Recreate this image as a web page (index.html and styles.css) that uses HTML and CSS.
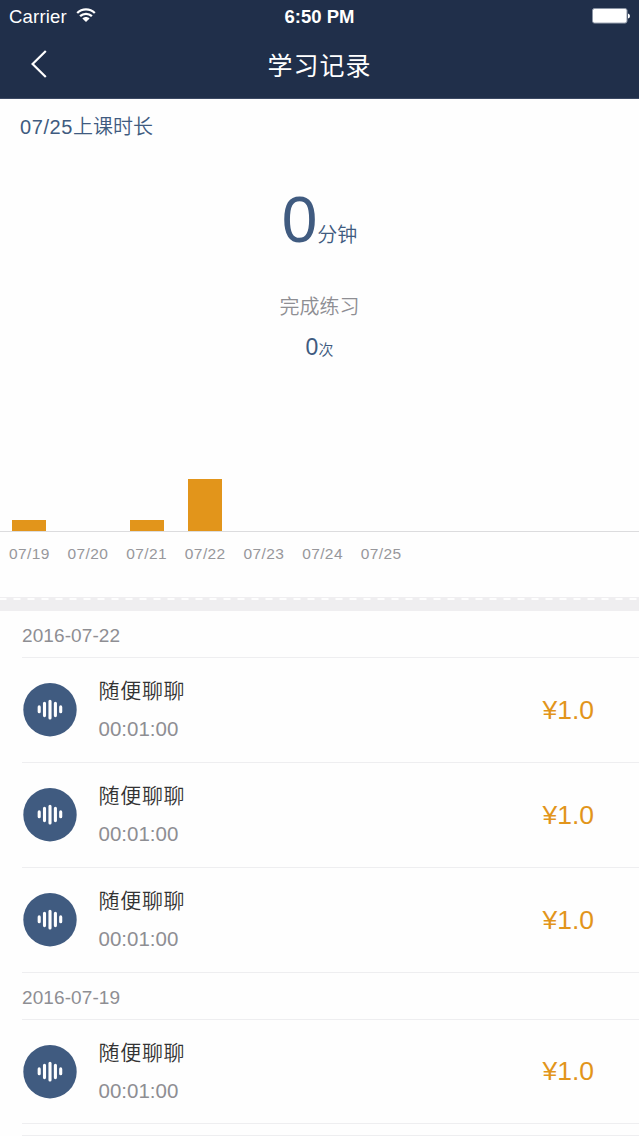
FILE: index.html
```html
<!DOCTYPE html>
<html lang="zh-CN">
<head>
    <meta charset="UTF-8">
    <meta name="viewport" content="width=device-width, initial-scale=1.0">
    <title>学习记录</title>
    <link rel="stylesheet" href="styles.css">
</head>
<body>
    <!-- 波形图标，列表里重复使用 -->
    <svg class="defs">
        <symbol id="wave" viewBox="0 0 54 54">
            <circle cx="27" cy="26.7" r="26.7" fill="#405b80"/>
            <path d="M16.2 23.9v4.8M21.5 20.2v12.4M27 18.3v16.6M32.4 20.2v12.4M37.7 23.9v4.8" stroke="#fff" stroke-width="3.1" stroke-linecap="round"/>
        </symbol>
    </svg>

    <div class="header">
        <div class="status">
            <div class="carrier">
                <span>Carrier</span>
                <svg class="wifi" viewBox="0 0 20 14">
                    <path d="M1.2 5C6.2.2 13.8.2 18.8 5M4.1 8.2C7.5 5 12.5 5 15.9 8.2" fill="none" stroke="#fff" stroke-width="2.3"/>
                    <path d="M6.4 10.4C8.4 8.4 11.6 8.4 13.6 10.4L10 14z" fill="#fff"/>
                </svg>
            </div>
            <div class="time">6:50 PM</div>
            <div class="power">
                <svg class="battery" viewBox="0 0 38 16">
                    <rect x=".5" y=".5" width="34.5" height="14.6" rx="2" fill="#fff" stroke="#8b95a5"/>
                    <path d="M36 5.5q2 .5 2 2.5t-2 2.5z" fill="#fff"/>
                </svg>
            </div>
        </div>
        <div class="nav">
            <svg class="back" viewBox="0 0 16 28"><path d="M14.8 1L1.6 14L14.8 27" fill="none" stroke="#fff" stroke-width="2.2"/></svg>
            <div class="title">学习记录</div>
        </div>
    </div>

    <div class="summary">
        <div class="day"><span class="num">07/25</span>上课时长</div>
        <div class="minutes"><span class="num">0</span>分钟</div>
        <div class="label">完成练习</div>
        <div class="times"><span class="num">0</span>次</div>
        <div class="chart">
            <div class="col"><div class="bar" style="height: 11px"></div></div>
            <div class="col"></div>
            <div class="col"><div class="bar" style="height: 11px"></div></div>
            <div class="col"><div class="bar" style="height: 52px"></div></div>
        </div>
        <div class="dates">
            <span>07/19</span>
            <span>07/20</span>
            <span>07/21</span>
            <span>07/22</span>
            <span>07/23</span>
            <span>07/24</span>
            <span>07/25</span>
        </div>
    </div>
    <div class="divider"></div>

    <div class="list">
        <div class="date">2016-07-22</div>
        <div class="item">
            <svg class="icon"><use href="#wave"/></svg>
            <div class="info">
                <div class="name">随便聊聊</div>
                <div class="length">00:01:00</div>
            </div>
            <div class="price">¥1.0</div>
        </div>
        <div class="item">
            <svg class="icon"><use href="#wave"/></svg>
            <div class="info">
                <div class="name">随便聊聊</div>
                <div class="length">00:01:00</div>
            </div>
            <div class="price">¥1.0</div>
        </div>
        <div class="item">
            <svg class="icon"><use href="#wave"/></svg>
            <div class="info">
                <div class="name">随便聊聊</div>
                <div class="length">00:01:00</div>
            </div>
            <div class="price">¥1.0</div>
        </div>
        <div class="date">2016-07-19</div>
        <div class="item last">
            <svg class="icon"><use href="#wave"/></svg>
            <div class="info">
                <div class="name">随便聊聊</div>
                <div class="length">00:01:00</div>
            </div>
            <div class="price">¥1.0</div>
        </div>
        <div class="rest"></div>
    </div>
</body>
</html>
```
FILE: styles.css
```css
*{
    box-sizing: border-box;
}
body{
    margin: 0;
    height: 1136px;
    overflow: hidden;
    background-color: #fefefe;
    font-family: "Liberation Sans", "Noto Sans CJK SC", sans-serif;
    font-weight: 350;
}
svg{
    display: block;
}
.defs{
    display: none;
}
/* 顶部 */
.header{
    height: 99px;
    background-color: #202f4a;
    border-bottom: 1px solid #3c4963;
    color: #ffffff;
}
.status{
    display: grid;
    grid-template-columns: 1fr auto 1fr;
    height: 32px;
    padding: 0 9px;
    line-height: 33px;
    font-size: 18.5px;
}
.carrier{
    display: flex;
    gap: 9px;
    letter-spacing: 0.2px;
}
.wifi{
    width: 20px;
    height: 14px;
    margin-top: 8px;
}
.time{
    font-weight: bold;
}
.power{
    display: flex;
    justify-content: flex-end;
}
.battery{
    width: 38px;
    height: 16px;
    margin-top: 8px;
}
.nav{
    display: grid;
    grid-template-columns: 1fr auto 1fr;
    align-items: center;
    height: 66px;
}
.back{
    width: 16px;
    height: 28px;
    margin: -3px 0 0 31px;
}
.title{
    margin-top: -3px;
    font-size: 25px;
    font-weight: 400;
    letter-spacing: 1px;
}
/* 统计 */
.summary{
    height: 498px;
    color: #405b80;
    text-align: center;
    font-size: 20px;
}
.day{
    height: 55px;
    padding-left: 20px;
    line-height: 56px;
    text-align: left;
}
.day .num{
    letter-spacing: 0.6px;
}
.minutes{
    height: 126px;
    line-height: 132px;
}
.minutes .num{
    font-size: 64px;
}
.label{
    height: 54px;
    line-height: 54px;
    color: #8e8e93;
}
.times{
    height: 28px;
    line-height: 26px;
    font-size: 15px;
}
.times .num{
    font-size: 23px;
}
.chart{
    display: flex;
    align-items: flex-end;
    height: 170px;
    border-bottom: 1px solid #dcdcde;
}
.col{
    width: 58.65px;
}
.bar{
    width: 34px;
    margin: 0 auto;
    background-color: #e2951b;
}
.dates{
    display: flex;
    line-height: 43px;
    font-size: 15.5px;
    letter-spacing: 0.4px;
    color: #97979b;
}
.dates span{
    width: 58.65px;
}
/* 上边缘是锯齿 */
.divider{
    height: 14px;
    background: repeating-linear-gradient(90deg, #fefefe 0 6px, #efeef0 7px 13px, #fefefe 14px) 0 1px / 100% 2px no-repeat #efeef0;
}
/* 记录列表 */
.list{
    padding-left: 22px;
}
.date{
    height: 47px;
    line-height: 50px;
    border-bottom: 1px solid #eeeef0;
    font-size: 19px;
    letter-spacing: 0.1px;
    color: #8e8e93;
}
.item{
    display: flex;
    align-items: center;
    height: 105px;
    padding: 0 45px 0 1px;
    border-bottom: 1px solid #eeeef0;
}
.last{
    height: 104px;
}
.icon{
    width: 54px;
    height: 54px;
}
.info{
    flex: 1;
    margin-left: 21.5px;
}
.name{
    height: 38px;
    line-height: 38px;
    font-size: 21px;
    letter-spacing: 0.7px;
    color: #333333;
}
.length{
    height: 38px;
    line-height: 37px;
    font-size: 20.5px;
    color: #8e8e93;
}
.price{
    font-size: 26.5px;
    color: #e2951b;
}
.rest{
    height: 12px;
    border-bottom: 1px solid #eeeef0;
}
```
